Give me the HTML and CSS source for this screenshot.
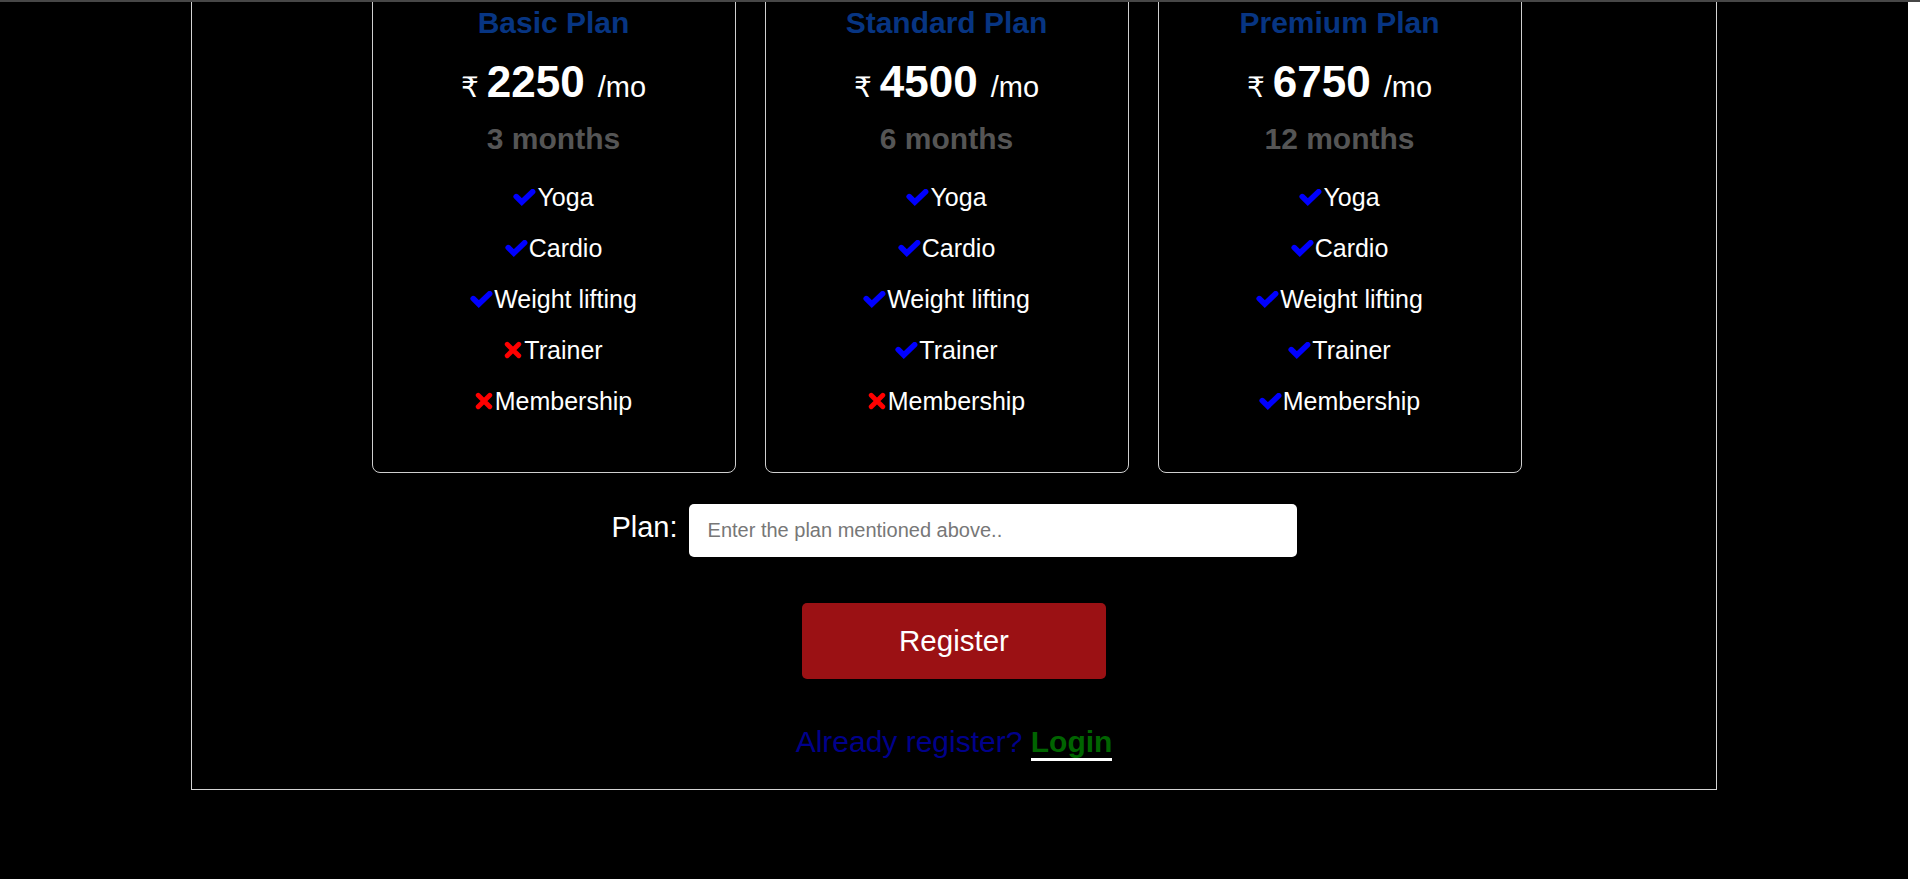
FILE: index.html
```html
<!DOCTYPE html>
<html lang="en">
<head>
<meta charset="utf-8">
<title>Register</title>
<link rel="stylesheet" href="styles.css">
</head>
<body>
<div class="page">
  <form class="panel">
    <div class="plans">
      <div class="card">
        <h3 class="plan-title">Basic Plan</h3>
        <div class="price"><span class="cur">₹</span><span class="amt">2250</span><span class="per">/mo</span></div>
        <div class="months">3 months</div>
        <ul class="features">
          <li><svg class="ic-check" viewBox="0 0 23 17"><polyline points="3.2,7.6 8.8,13.1 19.6,2.8"/></svg>Yoga</li>
          <li><svg class="ic-check" viewBox="0 0 23 17"><polyline points="3.2,7.6 8.8,13.1 19.6,2.8"/></svg>Cardio</li>
          <li><svg class="ic-check" viewBox="0 0 23 17"><polyline points="3.2,7.6 8.8,13.1 19.6,2.8"/></svg>Weight lifting</li>
          <li><svg class="ic-times" viewBox="0 0 18 18"><path d="M3.2 3.2L14.8 14.8M14.8 3.2L3.2 14.8"/></svg>Trainer</li>
          <li><svg class="ic-times" viewBox="0 0 18 18"><path d="M3.2 3.2L14.8 14.8M14.8 3.2L3.2 14.8"/></svg>Membership</li>
        </ul>
      </div>
      <div class="card">
        <h3 class="plan-title">Standard Plan</h3>
        <div class="price"><span class="cur">₹</span><span class="amt">4500</span><span class="per">/mo</span></div>
        <div class="months">6 months</div>
        <ul class="features">
          <li><svg class="ic-check" viewBox="0 0 23 17"><polyline points="3.2,7.6 8.8,13.1 19.6,2.8"/></svg>Yoga</li>
          <li><svg class="ic-check" viewBox="0 0 23 17"><polyline points="3.2,7.6 8.8,13.1 19.6,2.8"/></svg>Cardio</li>
          <li><svg class="ic-check" viewBox="0 0 23 17"><polyline points="3.2,7.6 8.8,13.1 19.6,2.8"/></svg>Weight lifting</li>
          <li><svg class="ic-check" viewBox="0 0 23 17"><polyline points="3.2,7.6 8.8,13.1 19.6,2.8"/></svg>Trainer</li>
          <li><svg class="ic-times" viewBox="0 0 18 18"><path d="M3.2 3.2L14.8 14.8M14.8 3.2L3.2 14.8"/></svg>Membership</li>
        </ul>
      </div>
      <div class="card">
        <h3 class="plan-title">Premium Plan</h3>
        <div class="price"><span class="cur">₹</span><span class="amt">6750</span><span class="per">/mo</span></div>
        <div class="months">12 months</div>
        <ul class="features">
          <li><svg class="ic-check" viewBox="0 0 23 17"><polyline points="3.2,7.6 8.8,13.1 19.6,2.8"/></svg>Yoga</li>
          <li><svg class="ic-check" viewBox="0 0 23 17"><polyline points="3.2,7.6 8.8,13.1 19.6,2.8"/></svg>Cardio</li>
          <li><svg class="ic-check" viewBox="0 0 23 17"><polyline points="3.2,7.6 8.8,13.1 19.6,2.8"/></svg>Weight lifting</li>
          <li><svg class="ic-check" viewBox="0 0 23 17"><polyline points="3.2,7.6 8.8,13.1 19.6,2.8"/></svg>Trainer</li>
          <li><svg class="ic-check" viewBox="0 0 23 17"><polyline points="3.2,7.6 8.8,13.1 19.6,2.8"/></svg>Membership</li>
        </ul>
      </div>
    </div>

    <div class="plan-row">
      <label class="plan-label" for="plan">Plan:</label>
      <input class="plan-input" id="plan" type="text" placeholder="Enter the plan mentioned above..">
    </div>

    <div class="btn-row">
      <button class="register-btn" type="button">Register</button>
    </div>

    <p class="login-line">Already register? <a class="login-link" href="#">Login</a></p>
  </form>
</div>
<div class="side-strip"></div>
</body>
</html>
```

FILE: styles.css
```css
html, body {
  margin: 0;
  padding: 0;
}

body {
  height: 879px;
  box-sizing: border-box;
  border-top: 2px solid #474747;
  display: flex;
  overflow: hidden;
  background: #000;
  font-family: "Liberation Sans", Arial, sans-serif;
  color: #fff;
}

.page {
  flex: 1;
  background: #000;
  min-width: 0;
}

.side-strip {
  width: 12px;
  background: #fff;
}

.panel {
  width: 1526px;
  box-sizing: border-box;
  margin: -80px auto 0;
  padding: 48px 0 30px;
  border: 1px solid #d4d4d4;
  display: flex;
  flex-direction: column;
  align-items: center;
}

.plans {
  display: flex;
  justify-content: center;
  gap: 29px;
  padding-right: 15px;
  align-self: stretch;
}

.card {
  width: 364px;
  box-sizing: border-box;
  border: 1px solid #cfcfcf;
  border-radius: 8px;
  padding: 34px 0 45px;
  text-align: center;
}

.plan-title {
  margin: 0;
  font-size: 30px;
  line-height: 34px;
  font-weight: bold;
  color: #073582;
}

.price {
  margin-top: 16px;
  height: 52px;
  display: flex;
  justify-content: center;
  align-items: baseline;
  color: #fff;
}

.cur {
  font-family: "DejaVu Sans", sans-serif;
  font-size: 28px;
  margin-right: 8px;
}

.amt {
  font-size: 44px;
  line-height: 52px;
  font-weight: bold;
  margin-right: 13px;
}

.per {
  font-size: 29px;
}

.months {
  margin-top: 14px;
  font-size: 30px;
  line-height: 34px;
  font-weight: bold;
  color: #555;
}

.features {
  list-style: none;
  margin: 16px 0 0;
  padding: 0;
}

.features li {
  font-size: 25px;
  line-height: 51px;
  color: #fff;
}

.ic-check {
  width: 23px;
  height: 17px;
  margin-right: 1px;
  vertical-align: baseline;
}

.ic-check polyline {
  fill: none;
  stroke: #0000ff;
  stroke-width: 5.6;
  stroke-linejoin: miter;
  stroke-linecap: round;
}

.ic-times {
  width: 18px;
  height: 18px;
  margin-right: 2px;
  vertical-align: baseline;
}

.ic-times path {
  fill: none;
  stroke: #ff0000;
  stroke-width: 4.8;
  stroke-linecap: round;
}

.plan-row {
  margin-top: 31px;
  display: flex;
  align-items: baseline;
  gap: 11px;
}

.plan-label {
  font-size: 29px;
  line-height: 34px;
  color: #fff;
}

.plan-input {
  width: 608px;
  height: 53px;
  box-sizing: border-box;
  border: none;
  border-radius: 5px;
  padding: 0 19px;
  font-family: "Liberation Sans", Arial, sans-serif;
  font-size: 20px;
  color: #333;
  background: #fff;
  outline: none;
}

.plan-input::placeholder {
  color: #777;
}

.btn-row {
  margin-top: 46px;
}

.register-btn {
  width: 304px;
  height: 76px;
  border: none;
  border-radius: 5px;
  background: #9b1114;
  color: #fff;
  font-family: "Liberation Sans", Arial, sans-serif;
  font-size: 29.5px;
  cursor: pointer;
}

.login-line {
  margin: 46px 0 0;
  font-size: 30px;
  line-height: 34px;
  color: #00008b;
}

.login-link {
  color: #006400;
  font-weight: bold;
  text-decoration: none;
  border-bottom: 3px solid #fff;
}
```
